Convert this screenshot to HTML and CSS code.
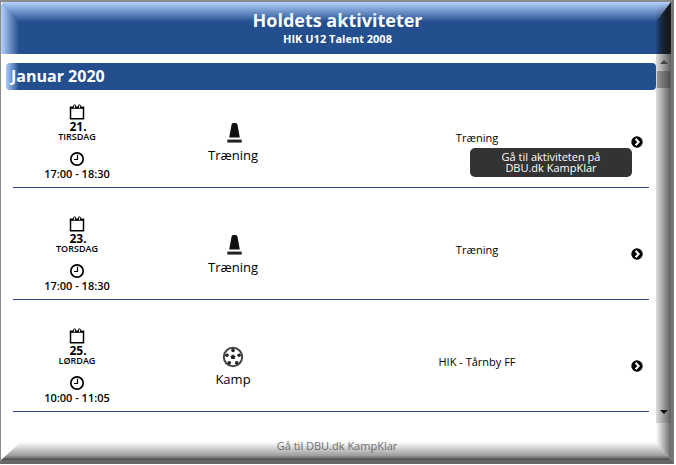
FILE: index.html
```html
<!DOCTYPE html>
<html lang="da">
<head>
<meta charset="utf-8">
<title>Holdets aktiviteter</title>
<link rel="stylesheet" href="styles.css">
</head>
<body>
<div class="frame">
  <header class="head">
    <h1 class="title">Holdets aktiviteter</h1>
    <p class="subtitle">HIK U12 Talent 2008</p>
  </header>
  <div class="body">
    <main class="main">
      <h2 class="month">Januar 2020</h2>
      <div class="rows">
        <article class="row">
          <div class="when">
            <svg class="cal" viewBox="0 0 16 16"><use href="#i-cal"/></svg>
            <div class="day">21.</div>
            <div class="weekday">TIRSDAG</div>
            <svg class="clock" viewBox="0 0 16 16"><use href="#i-clock"/></svg>
            <div class="time">17:00 - 18:30</div>
          </div>
          <div class="kind">
            <svg class="kind-icon" viewBox="0 0 24 24"><use href="#i-cone"/></svg>
            <div class="kind-label">Træning</div>
          </div>
          <div class="desc">Træning</div>
          <svg class="go" viewBox="0 0 12 12"><use href="#i-go"/></svg>
          <div class="tip">Gå til aktiviteten på<br>DBU.dk KampKlar</div>
        </article>
        <article class="row">
          <div class="when">
            <svg class="cal" viewBox="0 0 16 16"><use href="#i-cal"/></svg>
            <div class="day">23.</div>
            <div class="weekday">TORSDAG</div>
            <svg class="clock" viewBox="0 0 16 16"><use href="#i-clock"/></svg>
            <div class="time">17:00 - 18:30</div>
          </div>
          <div class="kind">
            <svg class="kind-icon" viewBox="0 0 24 24"><use href="#i-cone"/></svg>
            <div class="kind-label">Træning</div>
          </div>
          <div class="desc">Træning</div>
          <svg class="go" viewBox="0 0 12 12"><use href="#i-go"/></svg>
        </article>
        <article class="row">
          <div class="when">
            <svg class="cal" viewBox="0 0 16 16"><use href="#i-cal"/></svg>
            <div class="day">25.</div>
            <div class="weekday">LØRDAG</div>
            <svg class="clock" viewBox="0 0 16 16"><use href="#i-clock"/></svg>
            <div class="time">10:00 - 11:05</div>
          </div>
          <div class="kind">
            <svg class="kind-icon" viewBox="0 0 24 24"><use href="#i-ball"/></svg>
            <div class="kind-label">Kamp</div>
          </div>
          <div class="desc">HIK - Tårnby FF</div>
          <svg class="go" viewBox="0 0 12 12"><use href="#i-go"/></svg>
        </article>
      </div>
    </main>
    <div class="scrollbar">
      <span class="arrow-up"></span>
      <span class="thumb"></span>
      <span class="track"></span>
      <span class="arrow-down"></span>
    </div>
  </div>
  <footer class="foot">Gå til DBU.dk KampKlar</footer>
  <div class="bevel bevel-top"></div>
  <div class="bevel bevel-left"></div>
  <div class="bevel bevel-right"></div>
  <div class="bevel bevel-bottom"></div>
</div>
<svg class="defs" width="0" height="0">
  <defs>
    <g id="i-cal">
      <path d="M1.500 3.200h13v11.600h-13z" fill="#fff" stroke="#000" stroke-width="1.500"/>
      <path d="M1 3h14v1.800H1z" fill="#000"/>
      <path d="M4.600 4V1.800a1 1 0 0 1 2 0V4M9.400 4V1.800a1 1 0 0 1 2 0V4" fill="#fff" stroke="#000" stroke-width="1"/>
    </g>
    <g id="i-clock">
      <circle cx="8" cy="8" r="6.200" fill="#fff" stroke="#000" stroke-width="1.700"/>
      <path d="M8.500 3.800v4.700H5" fill="none" stroke="#000" stroke-width="1.200"/>
    </g>
    <g id="i-cone">
      <path d="M12.100 2h2.800c1 0 1.400 1 1.700 2.400l2.200 12.100H8.200l2.200-12.100C10.700 3 11.100 2 12.100 2z" fill="#111"/>
      <path d="M6.300 18.600h14.400v3H6.300z" fill="#222"/>
    </g>
    <g id="i-ball">
      <circle cx="12" cy="12" r="9.200" fill="#fff" stroke="#444" stroke-width="2"/>
      <path d="M12 9.400l2.500 1.800-.9 2.900h-3.200l-.9-2.900z" fill="#222"/>
      <circle cx="12" cy="5.400" r="1.800" fill="#222"/>
      <circle cx="5.900" cy="10.200" r="1.800" fill="#222"/>
      <circle cx="18.100" cy="10.200" r="1.800" fill="#222"/>
      <circle cx="8.300" cy="17.700" r="1.800" fill="#222"/>
      <circle cx="15.700" cy="17.700" r="1.800" fill="#222"/>
    </g>
    <g id="i-go">
      <circle cx="6" cy="6" r="5.700" fill="#000"/>
      <path d="M4.600 2.800l3.100 3.200-3.100 3.200" fill="none" stroke="#fff" stroke-width="2"/>
    </g>
  </defs>
</svg>
</body>
</html>
```

FILE: styles.css
```css
html, body {
  margin: 0;
  padding: 0;
  background: #fff;
}
body {
  width: 676px;
  height: 465px;
  overflow: hidden;
  font-family: "Open Sans", sans-serif;
  color: #000;
}
.defs {
  display: block;
}
.frame {
  position: relative;
  box-sizing: border-box;
  width: 674px;
  height: 464px;
  border-top: 2px solid #8a8a8a;
  border-left: 1px solid #8a8a8a;
  border-right: 3px solid #777;
  border-bottom: 4px solid #666;
  display: flex;
  flex-direction: column;
  overflow: hidden;
}
.head {
  height: 52px;
  flex: none;
  box-sizing: border-box;
  background: linear-gradient(to right, #234f8e calc(100% - 16px), #000 calc(100% - 2px));
  color: #fff;
  text-align: center;
  padding-left: 3px;
  border-top-left-radius: 6px;
}
.title {
  margin: 0;
  padding-top: 6px;
  font-size: 18px;
  line-height: 24px;
  font-weight: 700;
}
.subtitle {
  margin: 0;
  font-size: 11px;
  line-height: 14px;
  font-weight: 700;
}
.body {
  flex: none;
  height: 369px;
  display: flex;
}
.main {
  width: 655px;
  flex: none;
  padding: 9px 0 0 5px;
  box-sizing: border-box;
  overflow: hidden;
}
.month {
  margin: 0;
  height: 27px;
  background: linear-gradient(to right, #a8ccff, #234f8e 13px);
  border-radius: 4px;
  color: #fff;
  font-size: 16px;
  line-height: 27px;
  font-weight: 700;
  padding-left: 5px;
}
.rows {
  margin: 1px 0 0 7px;
  width: 636px;
  display: flex;
  flex-direction: column;
  gap: 15px;
}
.row {
  position: relative;
  height: 97px;
  box-sizing: border-box;
  border-bottom: 1px solid #2b4a7c;
  display: grid;
  grid-template-columns: 128px 184px 304px 16px;
  align-items: start;
}
.when {
  display: flex;
  flex-direction: column;
  align-items: center;
  padding-top: 13px;
}
.cal {
  width: 16px;
  height: 16px;
  display: block;
}
.day {
  font-size: 12px;
  line-height: 11px;
  font-weight: 700;
  margin-top: 1px;
  padding-left: 2px;
}
.weekday {
  font-size: 9px;
  line-height: 9px;
  font-weight: 600;
}
.clock {
  width: 16px;
  height: 16px;
  display: block;
  margin-top: 10px;
}
.time {
  font-size: 11px;
  line-height: 12px;
  font-weight: 600;
  margin-top: 1px;
}
.kind {
  display: flex;
  flex-direction: column;
  align-items: center;
  padding-top: 30px;
}
.kind-icon {
  width: 24px;
  height: 24px;
  display: block;
}
.kind-label {
  font-size: 13px;
  line-height: 18px;
  margin-top: 1px;
}
.desc {
  text-align: center;
  font-size: 11px;
  line-height: 16px;
  padding-top: 39px;
}
.go {
  width: 12px;
  height: 12px;
  display: block;
  margin: 45px 0 0 2px;
}
.tip {
  position: absolute;
  left: 457px;
  top: 57px;
  width: 162px;
  height: 29px;
  box-sizing: border-box;
  padding-top: 3px;
  background: #333;
  border-radius: 5px;
  color: #fff;
  font-size: 11px;
  line-height: 11px;
  text-align: center;
}
.scrollbar {
  width: 15px;
  flex: none;
  display: flex;
  flex-direction: column;
  align-items: center;
  background: #ddd;
}
.arrow-up {
  margin-top: 6px;
  border: 4px solid transparent;
  border-top: 0;
  border-bottom: 4px solid #505050;
}
.thumb {
  width: 13px;
  height: 17px;
  margin-top: 7px;
  background: #9a9a9a;
}
.track {
  flex: 1;
}
.arrow-down {
  margin-bottom: 9px;
  border: 4px solid transparent;
  border-bottom: 0;
  border-top: 4px solid #000;
}
.foot {
  flex: 1;
  text-align: center;
  font-size: 11px;
  line-height: 14px;
  color: #777;
  padding: 16px 0 0 2px;
}
.bevel {
  position: absolute;
  pointer-events: none;
}
.bevel-top {
  left: 0;
  right: 0;
  top: 0;
  height: 20px;
  background: linear-gradient(to bottom, #b4d2ff, rgba(168, 204, 255, 0));
  clip-path: polygon(0 0, 100% 0, calc(100% - 15px) 100%, 18px 100%);
}
.bevel-left {
  left: 0;
  top: 0;
  width: 18px;
  height: 52px;
  border-top-left-radius: 6px;
  background: linear-gradient(to right, #b4d2ff, rgba(168, 204, 255, 0));
  clip-path: polygon(0 0, 100% 20px, 100% 100%, 0 100%);
}
.bevel-right {
  right: 0;
  top: 0;
  bottom: 0;
  width: 15px;
  background: linear-gradient(to right, rgba(40, 40, 40, 0), rgba(40, 40, 40, .7));
  clip-path: polygon(0 20px, 100% 0, 100% 100%, 0 calc(100% - 18px));
}
.bevel-bottom {
  left: 0;
  right: 0;
  bottom: 0;
  height: 18px;
  background: linear-gradient(to bottom, rgba(60, 60, 60, 0), rgba(60, 60, 60, .5) 75%, rgba(50, 50, 50, .9));
  clip-path: polygon(20px 0, calc(100% - 15px) 0, 100% 100%, 0 100%);
}
```
